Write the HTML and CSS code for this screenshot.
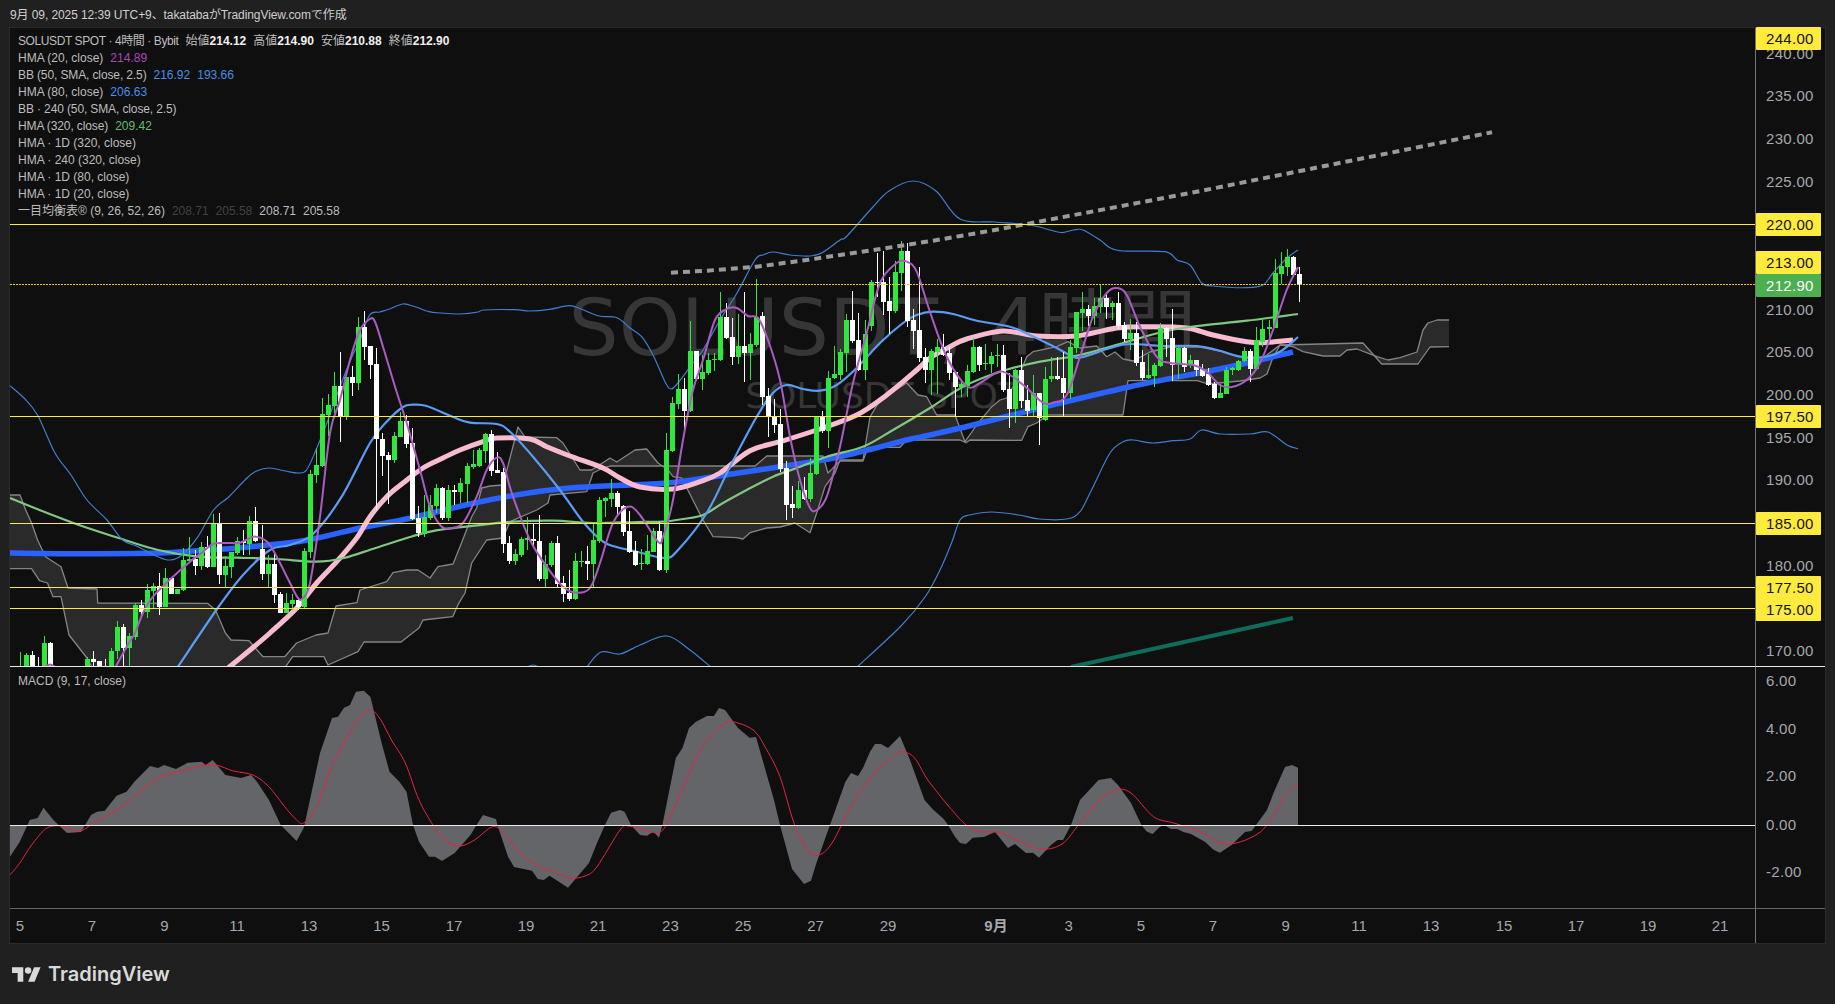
FILE: index.html
```html
<!DOCTYPE html>
<html lang="ja">
<head>
    <meta charset="UTF-8">
    <title>SOLUSDT SPOT 4時間</title>
    <link rel="stylesheet" href="styles.css">
</head>
<body>

<div class="topbar">9月 09, 2025 12:39 UTC+9、takatabaがTradingView.comで作成</div>

<div class="chart">
    <div class="pane main-pane" id="main-pane">
        <div class="watermark">
            <div class="wm-big">SOLUSDT, 4時間</div>
            <div class="wm-small">SOLUSDT SPOT</div>
        </div>
        <svg id="main-svg" class="plot" width="1745" height="638" viewBox="10 28 1745 638"></svg>
        <div class="legend">
            <div class="row"><span class="symbol">SOLUSDT SPOT · 4時間 · Bybit</span><span>始値<b>214.12</b></span><span>高値<b>214.90</b></span><span>安値<b>210.88</b></span><span>終値<b>212.90</b></span></div>
            <div class="row"><span>HMA (20, close)</span><span class="purple">214.89</span></div>
            <div class="row"><span class="tight">BB (50, SMA, close, 2.5)</span><span class="blue">216.92</span><span class="blue">193.66</span></div>
            <div class="row"><span>HMA (80, close)</span><span class="blue">206.63</span></div>
            <div class="row"><span class="tight">BB · 240 (50, SMA, close, 2.5)</span></div>
            <div class="row"><span class="tight">HMA (320, close)</span><span class="green">209.42</span></div>
            <div class="row"><span>HMA · 1D (320, close)</span></div>
            <div class="row"><span>HMA · 240 (320, close)</span></div>
            <div class="row"><span>HMA · 1D (80, close)</span></div>
            <div class="row"><span>HMA · 1D (20, close)</span></div>
            <div class="row"><span>一目均衡表® (9, 26, 52, 26)</span><span class="dim">208.71</span><span class="dim">205.58</span><span>208.71</span><span>205.58</span></div>
        </div>
    </div>
    <div class="axis main-axis" id="main-axis"></div>

    <div class="pane macd-pane">
        <svg id="macd-svg" class="plot" width="1745" height="241" viewBox="10 667 1745 241"></svg>
        <div class="legend macd-legend"><div class="row"><span>MACD (9, 17, close)</span></div></div>
    </div>
    <div class="axis macd-axis" id="macd-axis"></div>

    <div class="time-axis" id="time-axis"></div>
    <div class="axis corner"></div>
</div>

<div class="footer">
    <svg class="tv-mark" width="29" height="15" viewBox="0 4 36 18">
        <path d="M14 22H7V11H0V4h14v18zM28 22h-8l7.5-18h8L28 22z"/>
        <circle cx="20" cy="8" r="4"/>
    </svg>
    <span class="tv-name">TradingView</span>
</div>

<script src="chart.js"></script>
</body>
</html>
```

FILE: styles.css
```css
* {
    box-sizing: border-box;
}
body {
    margin: 0;
    width: 1835px;
    height: 1004px;
    overflow: hidden;
    background-color: #202020;
    font-family: "Liberation Sans", "Noto Sans CJK JP", sans-serif;
    display: flex;
    flex-direction: column;
}
.topbar {
    height: 27px;
    padding: 8px 0 0 10px;
    font-size: 12px;
    line-height: 14px;
    letter-spacing: -0.09px;
    color: #cfcfcf;
    white-space: nowrap;
}
.chart {
    margin: 0 9px;
    width: 1817px;
    height: 917px;
    border: 1px solid #2b2b2b;
    background-color: #0f0f0f;
    display: grid;
    grid-template-columns: 1745px 70px;
    grid-template-rows: 639px 241px 35px;
}
.pane {
    position: relative;
    overflow: hidden;
}
.main-pane {
    border-bottom: 1px solid #e8e8e8;
}
.plot {
    position: absolute;
    top: 0;
    left: 0;
    display: block;
}
.watermark {
    position: absolute;
    top: 0;
    left: 0;
    right: 0;
    display: flex;
    flex-direction: column;
    align-items: center;
    padding-top: 252px;
    font-family: "DejaVu Sans", "Noto Sans CJK JP", sans-serif;
    color: #363636;
    white-space: nowrap;
}
.wm-big {
    font-size: 79px;
    line-height: 96px;
}
.wm-small {
    font-size: 36px;
    line-height: 44px;
    margin-top: -2px;
}
.legend {
    position: absolute;
    top: 5px;
    left: 8px;
    font-size: 12px;
    line-height: 17px;
    color: #bdbdbd;
    white-space: nowrap;
}
.macd-legend {
    top: 6px;
}
.row {
    display: flex;
    gap: 7px;
}
.row b {
    color: #f0f0f0;
}
.symbol {
    letter-spacing: -0.4px;
}
.tight {
    letter-spacing: -0.12px;
}
.purple {
    color: #ab47bc;
}
.blue {
    color: #4a8fe8;
}
.green {
    color: #66bb6a;
}
.dim {
    color: #424242;
}
.axis {
    position: relative;
    border-left: 1px solid #777;
    font-size: 15px;
    color: #a6a8ad;
}
.main-axis {
    border-bottom: 1px solid #e8e8e8;
}
.tick {
    position: absolute;
    left: 10px;
    line-height: 18px;
    margin-top: -9px;
    letter-spacing: 0.3px;
}
.price-tag {
    position: absolute;
    left: 0;
    width: 65px;
    height: 23px;
    padding-left: 10px;
    line-height: 23px;
    letter-spacing: 0.3px;
    background-color: #ffeb3b;
    color: #131313;
    border-radius: 1px;
}
.price-tag.last {
    background-color: #4caf50;
    color: #fff;
}
.time-axis {
    position: relative;
    border-top: 1px solid #666;
    font-size: 15px;
    color: #a6a8ad;
}
.time-axis span {
    position: absolute;
    top: 8px;
    line-height: 18px;
    transform: translateX(-50%);
}
.time-axis .month {
    font-weight: bold;
}
.corner {
    border-top: 1px solid #666;
}
.footer {
    flex: 1;
    display: flex;
    align-items: center;
    gap: 7px;
    padding-left: 12px;
}
.tv-mark {
    fill: #d9d9d9;
}
.tv-name {
    font-family: Inter, sans-serif;
    font-size: 20px;
    font-weight: 600;
    color: #d9d9d9;
}
```

FILE: chart.js
```js
const SVG_NS = 'http://www.w3.org/2000/svg';
const mainSvg = document.getElementById('main-svg');
const macdSvg = document.getElementById('macd-svg');

const G = 1, W = 0;
const BAR_X0 = 20.3;
const BAR_STEP = 6.03;

// candles as [colour, body top, body bottom, wick top, wick bottom], y at 3x from y0
const candleBlocks = [
    { y0: 480, rows: [
        [G,570,600,516,600],[G,525,600,520,600],[W,525,600,513,600],[W,570,600,530,600],[G,489,600,468,600],[W,489,600,486,600],
        null,null,null,null,null,
        [G,537,600,530,600],[W,537,545,513,600],[W,543,600,543,600],[W,570,600,537,600],[G,513,600,504,600],[G,441,513,423,537],
        [W,441,504,433,558],[G,468,503,460,558],[G,375,471,370,480],[W,375,396,360,413],[G,330,396,312,413],[G,318,333,310,383],
        [W,318,381,279,404],[G,294,381,264,381],[W,294,342,290,342],[G,327,342,327,342],[G,240,330,205,332],[G,237,243,171,243],
        [W,237,258,210,285],[G,201,258,186,270],[W,201,262,168,264],[G,132,261,102,261],[W,132,285,99,312],[G,258,285,228,321],
        [G,216,261,216,294],[G,183,219,171,225],[W,183,190,150,225],[G,123,192,108,225],[W,123,183,81,186],[W,208,282,135,300],
        [G,252,282,225,325]
    ]},
    { y0: 300, rows: [
        [W,792,885,760,908],[W,882,940,877,940],[G,910,940,880,940],[G,900,912,882,930],[W,900,920,895,930],[G,753,920,745,925],
        [G,522,755,510,775],[G,495,525,445,548],[G,343,497,295,500],[G,316,345,283,407],[G,258,317,217,345],[W,258,350,157,425],
        [G,232,348,232,360],[W,232,248,197,287],[G,82,248,52,270],[W,82,140,33,180],[W,137,194,137,238],[W,192,418,145,630],
        [W,417,468,400,527],[W,465,480,455,613],[G,408,480,396,488],[G,363,410,335,412],[W,363,432,345,445],[W,430,656,385,660],
        [W,655,699,618,710],[G,652,702,585,710],[G,615,655,585,660],[G,565,617,553,640],[W,564,654,562,660],[G,570,655,555,662],
        [W,570,576,555,615],[G,548,576,535,610],[G,498,552,490,608],[G,492,500,450,507],[G,450,497,445,500],[G,402,452,400,490],
        [W,402,512,390,528],[W,510,518,455,520],[W,516,732,505,760],[W,729,783,708,792],[G,762,783,747,795],[G,716,765,710,772],
        [G,714,720,652,750],[W,718,722,670,745],[W,723,837,645,842],[G,793,837,765,862],[G,729,795,722,800],[W,729,852,708,860],
        [W,850,882,828,905],[W,880,897,810,902],[G,783,897,760,900],[G,784,787,752,800],[W,783,792,738,840],[G,720,792,670,860],
        [G,600,723,590,728],[G,595,602,590,650],[G,579,597,538,622],[W,579,620,573,645],[W,618,695,615,708],[W,693,757,632,760],
        [W,752,795,722,798],[G,790,793,748,810],[G,753,793,705,795],[G,693,755,685,757],[W,693,810,665,812]
    ]},
    { y0: 240, rows: [
        [G,630,990,580,1000],[G,489,632,472,635],[G,447,492,402,507],[W,447,513,415,585],[G,333,513,243,515],[W,333,418,333,424],
        [G,396,418,345,450],[G,360,400,340,405],[G,356,358,340,392],[G,232,360,157,362],[W,232,294,190,296],[W,292,350,234,375],
        [G,318,352,222,372],[W,318,340,157,426],[G,312,340,280,420],[G,230,315,118,320],[W,228,471,216,495],[W,468,528,445,590],
        [W,528,555,478,578],[W,552,686,508,695],[W,684,795,662,840],[W,792,804,738,834],[G,750,804,724,806],[W,750,777,710,780],
        [G,699,777,655,785],[G,530,702,530,706],[W,530,572,513,580],[G,415,572,392,623],[G,402,415,318,417],[G,336,405,328,420],
        [G,240,339,222,396],[W,240,303,152,310],[W,300,390,220,392],[G,282,390,240,420],[G,127,258,121,272],[W,127,130,38,172],
        [W,126,186,33,226],[W,183,212,110,282],[G,95,214,63,220],[G,33,99,3,152],[W,33,243,8,262],[W,240,272,207,327],
        [W,270,353,82,365],[W,351,390,324,428],[G,333,390,327,465],[G,321,336,296,463],[W,320,345,282,347],[W,340,398,320,420],
        [W,396,441,395,530],[G,432,441,420,470],[G,393,438,375,470],[G,321,396,294,398],[W,321,375,318,393],[G,370,373,313,390],
        [G,348,372,335,400],[G,345,347,313,380],[W,345,450,315,455],[W,447,507,400,563],[G,390,507,388,548],[W,390,483,350,503],
        [W,480,513,435,527],[G,460,510,405,530]
    ]},
    { y0: 260, rows: [
        [W,400,475,399,555],[G,357,480,320,483],[G,348,358,292,365],[W,348,358,292,360],[W,354,400,275,468],[G,262,400,240,417],
        [G,156,265,155,278],[G,148,160,97,212],[W,148,168,135,198],[G,138,168,113,195],[G,114,142,75,160],[W,114,140,99,178],
        [G,128,140,122,180],[W,128,198,96,206],[W,195,237,185,247],[G,220,237,178,270],[W,219,310,186,318],[W,306,355,270,360],
        [G,345,355,282,357],[G,316,348,310,380],[G,204,318,190,320],[W,204,237,200,290],[W,235,315,148,363],[G,264,313,262,356],
        [W,264,322,260,336],[G,300,312,285,325],[W,300,330,300,348],[W,326,348,312,352],[W,342,375,325,378],[W,372,414,365,418],
        [G,399,414,372,414],[G,330,402,320,402],[G,325,331,320,345],[G,304,330,300,332],[G,274,304,262,306],[W,273,327,268,365],
        [G,240,327,202,330],[G,207,245,175,260],[G,201,208,180,240]
    ]},
    { y0: 230, rows: [
        [G,129,293,87,293],[G,108,132,67,162],[G,82,110,57,137],[W,82,135,79,137],[W,132,163,110,215]
    ]}
];

const bbUpper = [10,385.7,24,398,37.5,415,55,453,71,475,87,500,107,520,122.6,540,138,546.7,158,556.7,170,560,182,555,198,536.7,213.5,510,229,496.7,245,480,255,471.7,269,468,285,471,298.5,473,306.5,470,316,450,328,420,340,386.7,352,356.7,360,340,369.7,315,379.6,312,389.5,309,403,304,415,306.7,429,311.7,441,313,460.6,314,478,312,484,310,514,309.7,530,311,549.6,309.3,569,305.7,581,309,599,316,617,317.7,630,328,641.7,336.7,653,355,665,381.7,671,389,678,383,693,363,703,350,720,320,737,293,755,260,763,255,773,252,790,255,810,256,822,252.7,840,240,847,236,872,208,889,191,913,181,936,191,960,219,995,222,1030,225,1050,230,1062,232.7,1073,230,1083,230,1100,240,1110,247.7,1123,251,1165,251.7,1177,260,1190,265,1201.7,283,1213,286,1247,287.7,1263,285,1273,273,1287,258,1298,250];
const bbLowerA = [525,668,533,665,541,668];
const bbLowerB = [586,668,601,652,620,654,640,645,667,636,690,650,712,668];
const bbLowerC = [856,668,901,626,925,597,940,570,952,541.7,960,520,969.7,515,991.5,512,1019,515,1039,519,1066.6,519,1080,511.7,1092,489,1110,453,1123,441.7,1133,440,1153,443,1173,440.7,1190,439,1201.7,430,1220,434,1250,434,1268,432,1287,445,1298,448.7];
const hma80 = [177,668,217,609,243,575,270,550,290,545,313,534,341.7,496.7,370,443,386.7,421.7,403,407,413,404.7,426.7,406,453,417,470,422.7,496.7,424,510,431.7,533,456.7,560,490,583,521.7,603,541.7,616.7,547,636.7,551.7,665,558,678,550,706.7,513,730,466.7,756.7,416.7,773,393,786.7,385,803,389,820,390.7,836.7,385,856.7,368,880,343,903,323,916.7,315,933,311.7,953,314,976.7,320.7,1010,326.7,1030,335,1056.7,348,1073,356.7,1083,357,1110,348,1130,344,1163,346,1197,346,1217,350,1240,356.7,1263,357,1280,351.7,1298,337];
const hma20Bump = [45,667,50,664.5,55,667];
const hma20 = [115,668,126.7,646.7,135,633,143,613,153,596.7,173,576.7,190,561.7,203,551.7,213,544,226.7,543,240,542.7,253,536.7,263,539,270,545,280,563,290,583,298,598,303,598,310,583,320,516.7,330,433,340,400,350,360,360,330,370,319,375,321.7,383,346.7,395,386.7,406.7,423,420,470,430,506.7,441.7,526.7,451.7,528,463,523,476.7,496.7,486.7,470,496.7,457.7,503,463,513,496.7,530,540,546.7,566.7,563,586.7,576.7,592.7,590,588,600,563,613,523,628,506.7,640,515,658,541.7,663,536.7,673,500,683,440,693,390,703,360,715,320,726.7,309,736.7,308,748,316,758,318,768,340,780,380,790,436.7,800,480,810,508,816.7,510,826.7,496.7,840,446.7,853,383,866.7,333,880,283,896.7,263,906.7,261.7,916.7,271.7,930,312,946.7,356.7,966.7,386,980,383,998,372,1010,375,1026.7,388,1043,402.7,1053,402.7,1066.7,395,1080,356.7,1093,316.7,1106.7,293,1116.7,288,1126.7,295,1140,326.7,1156.7,356.7,1170,363,1193,365,1206.7,371.7,1220,385,1231.7,387,1246.7,380,1260,363,1273,330,1286.7,290,1298,267];
const hma320 = [10,498,39.5,510,79,525,118.6,538,158,550,198,556.7,237,557.7,277,559,316,561.7,344,558,375.6,548,411,536.7,435,530.7,474.5,525.7,514,521.7,553.6,520.7,593,523,636.7,522,663,521.7,683,519,703,515,723,503,746.7,490,773,476.7,796.7,468,826.7,456.7,863,446.7,893,430,930,408,963,386.7,1000,371.7,1040,361.7,1080,355,1123,343,1163,331.7,1197,326,1247,320.7,1298,314];
const pink = [228,668,250,650,270,633,296.7,608,316.7,583,336.7,561.7,356.7,538,370,516.7,386.7,496.7,403,483,423,468,443,458,460,450,483,441.7,496.7,438,530,439,546.7,446.7,570,456,603,468,620,478,640,487,673,489,700,481.7,720,473,750,450.7,780,441.7,816.7,430,856.7,415,886.7,395,916.7,370,930,358,950,346.7,966.7,339,1003,331,1036.7,336,1076.7,336,1116.7,328,1150,326.7,1186.7,328,1213,335,1246.7,341.7,1263,342.7,1293,340];
const thickBlue = [10,553,79,553.7,158,553,198,550.7,237,548,277,544,308,540,356,529,411,518,474.5,503,530,492.7,573,487.7,620,485.3,670,482.7,706.7,477.7,780,466.7,840,456.7,906.7,440,930,435,973,425,1040,408,1130,386.7,1230,366.7,1293,352];
const spanA = [10,495,20,495,25.7,510,31.6,523,37.6,540,45.5,556.7,61,566.7,68,588,97,589,97.7,603,207.6,603.3,215.5,610,225.4,633,231,640,249,640.7,263,656.7,284.7,656.7,296.6,643,316,635,328,633,336,606,357,602.7,360,590,386.7,581.7,393,572.7,406.7,570,418,570,430,578,438,566.7,453,564,460,546.7,471.7,516.7,476.7,508,481.7,488,490,486,503,485,518,427,525,437,556.7,437.7,563,443,580,470,591.7,470,610,458,616.7,462,635,450,646.7,449,658,463,668,470,673,476.7,681.7,478,703,520,713,536.7,736.7,537.7,743,539,750,532.7,766.7,528,780,527,795,523,810,532.7,816.7,513,825,486.7,835,473,840,460,863,460,870,417,880,400,906.7,383,918,395,926.7,396.7,936.7,415,955,415,965,441.7,976.7,425,991.7,406.7,1000,400,1006.7,398,1018,378,1026.7,356.7,1033,351.7,1056.7,346.7,1068,341.7,1080,348,1096.7,346,1106.7,356.7,1115,352,1123,359,1133,361,1150,352,1170,347,1200,347,1225,352,1245,358,1263,358,1280,345,1293,346.7,1303,351.7,1323,356,1340,356,1347,350,1357,349,1377,356.7,1388,360,1400,357.7,1417,352,1423,330,1428,323,1437,320,1449,320];
const spanB = [10,568.7,31.6,568.7,39.5,580.7,47.5,583,53,596.7,61,596.7,69,635,87,658,93,669,284,669,292.6,656.7,324,656.7,328,665,358,651.7,364,642,401,642,419,628,423,620,452.7,616.7,458.7,603.3,465,593,471.7,563,486.7,540,503,538,510,521.7,536.7,510,548,503,550,495,586.7,491.7,593,473,603,468,610,466,755,466,766.7,456,823,456,828,473,840,461,863,461,868,447.3,900,447.3,906.7,440,960,440,966,442.7,970,440,1021.7,440.3,1028,426.7,1036.7,423,1048,415,1123,415,1128,380.7,1197,380.7,1208,384,1240,381,1260,378,1267,374,1272,360,1280,345,1363,343,1381.7,364,1418,364,1430,347,1449,346.7];
const dotted = [671,272.7,706.7,270.7,756.7,266.7,806.7,260,840,255,886.7,248,933,240.7,995,230,1202,190.7,1492,132.3];
const trend = [1071,667,1293,618];

const macdArea = [10,825,10,856.7,19.8,841.7,29.7,820,37.6,818,43.5,807.7,53.4,820,67,833,81,832,91,815,97,811.7,104.8,810.7,116.6,795.7,126.5,791.7,134.4,781.7,150,766,158,768,164,765,176,769,187.8,762.7,201.7,761.7,205.6,765,212.7,760,225.4,775,241,778,251,775,257,781.7,268.9,800,280.7,825,296.6,841,303.7,828,304.5,825,320,753,332,718,338,716.7,344,707.7,350,705,355.9,691.7,363.8,690.7,370.5,697,381.6,743,389.5,771.7,399.4,781.7,406.5,791.7,413,825,419,841.7,429,856.7,435,856.7,442,861,454.7,853,470.5,835,476.5,825,483,815,496,819,497.4,825,508,856.7,514,867,532,870.7,537.8,879,543.7,880,549.6,875.7,568,887.7,589,863,597,843,605,825,611,812.7,620,810,624.5,811.7,631,825,640,835,646.8,835.7,653.5,831.7,659,837.7,662.4,825,675.8,758,682.5,748,689,728,696,721.7,707,716,713.8,716,719,708,725,710,738,728,749.5,737.7,756,737,774,800,780,825,792,869,804,884,811,880.7,816.4,863,830,825,845.4,781.7,851,773,858,776,863,768,870,751.7,875,744,881,744,888,748,900,736,910,760,924.5,800,932.5,809,943.7,819,948,825,955,836.7,960,843,966,844,972.7,837.7,984,837,995,832,1008,848,1015,844,1026,853,1033,852.7,1039,857.7,1051,845,1057.5,840,1063,840,1071,825,1080,800,1098.6,780,1111,778,1118,785,1131,803,1141.4,825,1147,831.7,1152.6,834,1160,826.7,1164,825,1171,829,1177,829,1183.4,832,1191,834,1204.8,841.7,1213.8,850,1220,852.7,1231.6,845,1245,832,1251.7,831,1256,825,1267,810,1274,791.7,1285,767,1292,765,1298,767.7,1298,825];
const macdSignal = [10,875,19.8,863,31.6,845,45.5,829,57.3,825.7,67,828,81,830.7,95,821.7,108.7,815,126.5,802.7,152,781.7,168,774,178,772,197.7,766.7,215.5,765,233.3,771,253,775,268.9,786.7,284.7,806.7,296.6,820,303.7,823,316,808,332,766.7,348,735,357.8,720,369.7,710,379.6,718,391.5,740,405.3,763,419,800,435,828,449,842.7,460.6,846,474.5,840,488.3,829,496,826.7,506,835,522,855,541.7,868,553.6,871.7,569.4,878,585,876,597,866.7,620,830,629,826,644.6,830,660,832,671,815,696,758,709,738,725,723,738,723,754,730.7,765,746.7,780,776.7,794,823,807.5,850,818.7,855,832,843,852,805,874.5,773,890,760,901,751.7,914.6,758,930,783,963.8,823,981.6,831.7,997,832,1013,838,1039.6,849,1062,844,1080,823,1100,800,1115.5,790,1131,793,1153.5,816.7,1173.6,823,1200,831.7,1220,842.7,1236,843,1254,836,1267,825,1285,796.7,1298,784];

function el(parent, name, attrs) {
    const node = document.createElementNS(SVG_NS, name);
    for (const key in attrs) node.setAttribute(key, attrs[key]);
    parent.appendChild(node);
    return node;
}

function toPoints(flat) {
    const out = [];
    for (let i = 0; i < flat.length; i += 2) out.push([flat[i], flat[i + 1]]);
    return out;
}

function straight(flat) {
    return toPoints(flat).map((p, i) => (i ? 'L' : 'M') + p[0] + ' ' + p[1]).join(' ');
}

// catmull-rom through the read-off points, so the indicators don't look faceted
function smooth(flat) {
    const p = toPoints(flat);
    let d = 'M' + p[0][0] + ' ' + p[0][1];
    for (let i = 0; i < p.length - 1; i++) {
        const a = p[Math.max(i - 1, 0)], b = p[i], c = p[i + 1], e = p[Math.min(i + 2, p.length - 1)];
        const c1x = b[0] + (c[0] - a[0]) / 6, c1y = b[1] + (c[1] - a[1]) / 6;
        const c2x = c[0] - (e[0] - b[0]) / 6, c2y = c[1] - (e[1] - b[1]) / 6;
        d += ` C${c1x.toFixed(1)} ${c1y.toFixed(1)} ${c2x.toFixed(1)} ${c2y.toFixed(1)} ${c[0]} ${c[1]}`;
    }
    return d;
}

function line(svg, d, color, width, extra) {
    el(svg, 'path', Object.assign({ d: d, fill: 'none', stroke: color, 'stroke-width': width, 'stroke-linejoin': 'round' }, extra || {}));
}

function hline(svg, y, color, extra) {
    el(svg, 'line', Object.assign({ x1: 10, x2: 1755, y1: y, y2: y, stroke: color, 'stroke-width': 1 }, extra || {}));
}

function drawCloud() {
    const a = toPoints(spanA), b = toPoints(spanB).reverse();
    const d = a.concat(b).map((p, i) => (i ? 'L' : 'M') + p[0] + ' ' + p[1]).join(' ') + ' Z';
    el(mainSvg, 'path', { d: d, fill: '#2a2a2a', 'fill-rule': 'evenodd' });
    line(mainSvg, straight(spanA), '#858585', 1.3);
    line(mainSvg, straight(spanB), '#858585', 1.3);
}

function drawCandles() {
    let i = 0;
    candleBlocks.forEach(block => {
        block.rows.forEach(row => {
            const x = Math.round(BAR_X0 + BAR_STEP * i);
            i++;
            if (!row) return;
            const color = row[0] === G ? '#33e63f' : '#ffffff';
            const y = v => Math.round(block.y0 + v / 3);
            el(mainSvg, 'rect', { x: x, y: y(row[3]), width: 1, height: Math.max(y(row[4]) - y(row[3]), 1), fill: color, 'shape-rendering': 'crispEdges' });
            el(mainSvg, 'rect', { x: x - 2, y: y(row[1]), width: 5, height: Math.max(y(row[2]) - y(row[1]), 1), fill: color, 'shape-rendering': 'crispEdges' });
        });
    });
}

function drawMain() {
    drawCloud();
    line(mainSvg, smooth(thickBlue), '#2962ff', 5.5);
    line(mainSvg, smooth(pink), '#f8bbd0', 5);
    line(mainSvg, smooth(hma320), '#81c784', 2.2);
    line(mainSvg, smooth(bbUpper), '#3f7fd0', 1.2);
    line(mainSvg, smooth(bbLowerA), '#3f7fd0', 1.2);
    line(mainSvg, smooth(bbLowerB), '#3f7fd0', 1.2);
    line(mainSvg, smooth(bbLowerC), '#3f7fd0', 1.2);
    line(mainSvg, smooth(hma80), '#5b9cf6', 2.2);
    drawCandles();
    line(mainSvg, smooth(hma20Bump), '#ab5cc0', 2);
    line(mainSvg, smooth(hma20), '#ab5cc0', 2);
    line(mainSvg, straight(dotted), '#9a9a9a', 4, { 'stroke-dasharray': '7 5' });
    line(mainSvg, straight(trend), '#0f6b5a', 4);
    [224.5, 416.5, 523.5, 587.5, 608.5].forEach(y => hline(mainSvg, y, '#ffeb3b'));
    hline(mainSvg, 284.5, '#f7c61a', { 'stroke-dasharray': '2 1' });
}

function drawMacd() {
    el(macdSvg, 'path', { d: straight(macdArea) + ' Z', fill: '#636569' });
    line(macdSvg, smooth(macdSignal), '#e8243f', 1);
    hline(macdSvg, 825.5, '#eeeeee');
}

function priceY(p) {
    return 224.3 + (220 - p) * 8.53;
}

function addTick(box, text, y) {
    const tick = document.createElement('div');
    tick.className = 'tick';
    tick.textContent = text;
    tick.style.top = y + 'px';
    box.appendChild(tick);
}

function addTag(box, text, top, extraClass) {
    const tag = document.createElement('div');
    tag.className = 'price-tag' + (extraClass ? ' ' + extraClass : '');
    tag.textContent = text;
    tag.style.top = top + 'px';
    box.appendChild(tag);
}

function drawAxes() {
    const mainAxis = document.getElementById('main-axis');
    [240, 235, 230, 225, 210, 205, 200, 195, 190, 180, 170].forEach(p => {
        addTick(mainAxis, p.toFixed(2), priceY(p) - 28);
    });
    // tags with the top edge of each, in page px
    [['244.00', 27], ['220.00', 213], ['213.00', 251], ['197.50', 405], ['185.00', 512], ['177.50', 576], ['175.00', 598]].forEach(t => {
        addTag(mainAxis, t[0], t[1] - 28);
    });
    addTag(mainAxis, '212.90', 274 - 28, 'last');

    const macdAxis = document.getElementById('macd-axis');
    [['6.00', 681], ['4.00', 729], ['2.00', 776], ['0.00', 825], ['-2.00', 872]].forEach(t => {
        addTick(macdAxis, t[0], t[1] - 667);
    });

    const timeAxis = document.getElementById('time-axis');
    [['5', 19.8], ['7', 92], ['9', 164.5], ['11', 237], ['13', 309], ['15', 381.6], ['17', 454], ['19', 526], ['21', 598],
     ['23', 670.4], ['25', 743], ['27', 815.5], ['29', 888], ['9月', 996], ['3', 1068.7], ['5', 1141], ['7', 1213], ['9', 1285.6],
     ['11', 1359], ['13', 1431], ['15', 1504], ['17', 1576], ['19', 1648], ['21', 1720]].forEach(t => {
        const label = document.createElement('span');
        label.textContent = t[0];
        if (t[0] === '9月') label.className = 'month';
        label.style.left = (t[1] - 10) + 'px';
        timeAxis.appendChild(label);
    });
}

drawMain();
drawMacd();
drawAxes();
```
